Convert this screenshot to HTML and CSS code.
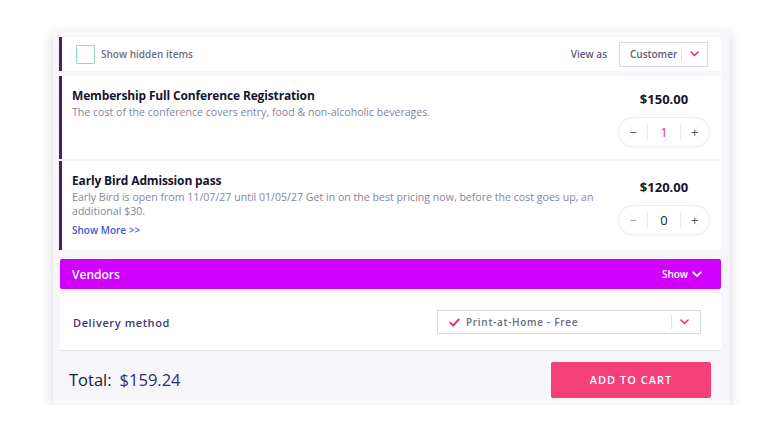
FILE: index.html
```html
<!DOCTYPE html>
<html>
<head>
<meta charset="utf-8">
<link rel="stylesheet" href="styles.css">
</head>
<body>
<div class="card">
  <div class="list">
    <div class="row toolbar">
      <label class="check"><span class="box"></span><span class="check-label">Show hidden items</span></label>
      <div class="view-as">
        <span class="view-label">View as</span>
        <div class="select small">
          <span class="select-text">Customer</span>
          <span class="sep"></span>
          <svg class="chev" width="9" height="6" viewBox="0 0 9 6"><path d="M1 1l3.5 3.5L8 1" fill="none" stroke="#e8336d" stroke-width="1.6" stroke-linecap="round" stroke-linejoin="round"/></svg>
        </div>
      </div>
    </div>

    <div class="row item">
      <div class="info">
        <div class="title">Membership Full Conference Registration</div>
        <div class="desc">The cost of the conference covers entry, food &amp; non-alcoholic beverages.</div>
      </div>
      <div class="buy">
        <div class="price">$150.00</div>
        <div class="stepper">
          <span class="op">−</span>
          <span class="qty active">1</span>
          <span class="op">+</span>
        </div>
      </div>
    </div>

    <div class="row item second">
      <div class="info">
        <div class="title">Early Bird Admission pass</div>
        <div class="desc">Early Bird is open from 11/07/27 until 01/05/27 Get in on the best pricing now, before the cost goes up, an additional $30.</div>
        <a class="more">Show More &gt;&gt;</a>
      </div>
      <div class="buy">
        <div class="price">$120.00</div>
        <div class="stepper">
          <span class="op dim">−</span>
          <span class="qty">0</span>
          <span class="op">+</span>
        </div>
      </div>
    </div>

    <div class="vendors">
      <span class="vendors-title">Vendors</span>
      <span class="show">Show
        <svg width="10" height="7" viewBox="0 0 10 7"><path d="M1.2 1.4L5 5.2l3.8-3.8" fill="none" stroke="#fff" stroke-width="1.8" stroke-linecap="round" stroke-linejoin="round"/></svg>
      </span>
    </div>

    <div class="delivery">
      <span class="delivery-label">Delivery method</span>
      <div class="select wide">
        <svg class="tick" width="11" height="9" viewBox="0 0 11 9"><path d="M1.3 4.6l2.9 2.9L9.8 1.5" fill="none" stroke="#e8336d" stroke-width="2" stroke-linecap="round" stroke-linejoin="round"/></svg>
        <span class="select-text spaced">Print-at-Home - Free</span>
        <span class="sep"></span>
        <svg class="chev" width="9" height="6" viewBox="0 0 9 6"><path d="M1 1l3.5 3.5L8 1" fill="none" stroke="#e8336d" stroke-width="1.6" stroke-linecap="round" stroke-linejoin="round"/></svg>
      </div>
    </div>
  </div>

  <div class="footer">
    <div class="total"><span class="total-label">Total:</span><span class="total-value">$159.24</span></div>
    <button class="cart">ADD TO CART</button>
  </div>
</div>
</body>
</html>
```

FILE: styles.css
```css
* { box-sizing: border-box; }
body {
  margin: 0;
  background: #ffffff;
  font-family: "Open Sans", "DejaVu Sans", sans-serif;
  color: #17172f;
}
.card {
  margin: 30px 0 0 53px;
  width: 677px;
  height: 375px;
  background: #f7f7fb;
  box-shadow: 0 4px 11px rgba(30, 30, 60, 0.18);
  display: flex;
  flex-direction: column;
}
.list {
  padding: 7px 9px 0 6px;
  display: flex;
  flex-direction: column;
}
.row {
  background: #ffffff;
  border-left: 3px solid #4a1d6f;
  display: flex;
}
.toolbar {
  height: 34px;
  align-items: center;
  justify-content: space-between;
  padding: 0 13px 0 14px;
}
.check {
  display: flex;
  align-items: center;
}
.box {
  width: 19px;
  height: 19px;
  border: 1.5px solid #8edcc4;
  border-radius: 1px;
}
.check-label {
  margin-left: 6px;
  font-size: 10px;
  font-weight: 600;
  color: #6e6e82;
}
.view-as {
  display: flex;
  align-items: center;
}
.view-label {
  font-size: 10px;
  font-weight: 600;
  color: #5c5c72;
  margin-right: 12px;
}
.select {
  display: flex;
  align-items: center;
  background: #fff;
  border: 1px solid #d9d9e1;
}
.select.small {
  width: 89px;
  height: 25px;
  padding: 0 8px 0 10px;
}
.select-text {
  flex: 1;
  font-size: 10px;
  font-weight: 600;
  color: #5e5e72;
}
.sep {
  width: 1px;
  height: 14px;
  background: #e2e2e8;
  margin-right: 8px;
}
.chev { display: block; }
.item {
  margin-top: 5px;
  padding: 14px 11px 12px 10px;
  align-items: center;
  justify-content: space-between;
}
.item.second { margin-top: 2px; padding-bottom: 13px; }
.info {
  align-self: flex-start;
  width: 530px;
  margin-top: -3px;
}
.title {
  font-size: 12px;
  font-weight: 700;
  letter-spacing: -0.15px;
  line-height: 18px;
  color: #15152d;
}
.desc {
  font-size: 10.6px;
  line-height: 14px;
  color: #85859a;
}
.more {
  display: block;
  margin-top: 5px;
  font-size: 10px;
  line-height: 14px;
  font-weight: 600;
  color: #3d5bcf;
}
.buy {
  display: flex;
  flex-direction: column;
  align-items: center;
  width: 92px;
}
.price {
  font-size: 13px;
  font-weight: 700;
  color: #15152d;
  line-height: 18px;
  margin-bottom: 9px;
}
.stepper {
  width: 92px;
  height: 30px;
  border: 1px solid #ededf2;
  border-radius: 15px;
  box-shadow: 0 1px 3px rgba(0, 0, 0, 0.05);
  display: flex;
  align-items: center;
}
.op {
  width: 29px;
  text-align: center;
  font-size: 13px;
  color: #55556c;
}
.op.dim { color: #a0a0b0; }
.qty {
  width: 34px;
  text-align: center;
  font-size: 13px;
  color: #202050;
  border-left: 1px solid #ececf1;
  border-right: 1px solid #ececf1;
  line-height: 18px;
}
.qty.active { color: #e3336c; }
.vendors {
  margin: 9px 0 0 1px;
  height: 30px;
  background: #d000fc;
  border-radius: 2px;
  display: flex;
  align-items: center;
  justify-content: space-between;
  padding: 0 19px 0 12px;
  color: #fff;
}
.vendors-title {
  font-size: 12px;
  font-weight: 600;
}
.show {
  display: flex;
  align-items: center;
  gap: 4px;
  font-size: 10px;
  font-weight: 600;
}
.delivery {
  margin: 5px 0 0 1px;
  height: 57px;
  background: #fff;
  border-bottom: 1px solid #e6e6ee;
  display: flex;
  align-items: center;
  justify-content: space-between;
  padding: 0 20px 0 13px;
}
.delivery-label {
  font-size: 11px;
  font-weight: 600;
  letter-spacing: 0.6px;
  color: #393978;
}
.select.wide {
  width: 264px;
  height: 24px;
  padding: 0 11px 0 11px;
}
.tick { margin-right: 6px; display: block; }
.spaced { letter-spacing: 0.7px; color: #6a6a7e; }
.footer {
  flex: 1;
  display: flex;
  align-items: center;
  justify-content: space-between;
  padding: 3px 19px 0 16px;
}
.total {
  font-size: 16.5px;
  display: flex;
  gap: 8px;
}
.total-label { color: #1b1b2e; }
.total-value { color: #2e2e6c; }
.cart {
  width: 160px;
  height: 36px;
  border: none;
  border-radius: 2px;
  background: #f43f78;
  color: #fff;
  font-family: inherit;
  font-size: 11px;
  font-weight: 600;
  letter-spacing: 1px;
}
```
